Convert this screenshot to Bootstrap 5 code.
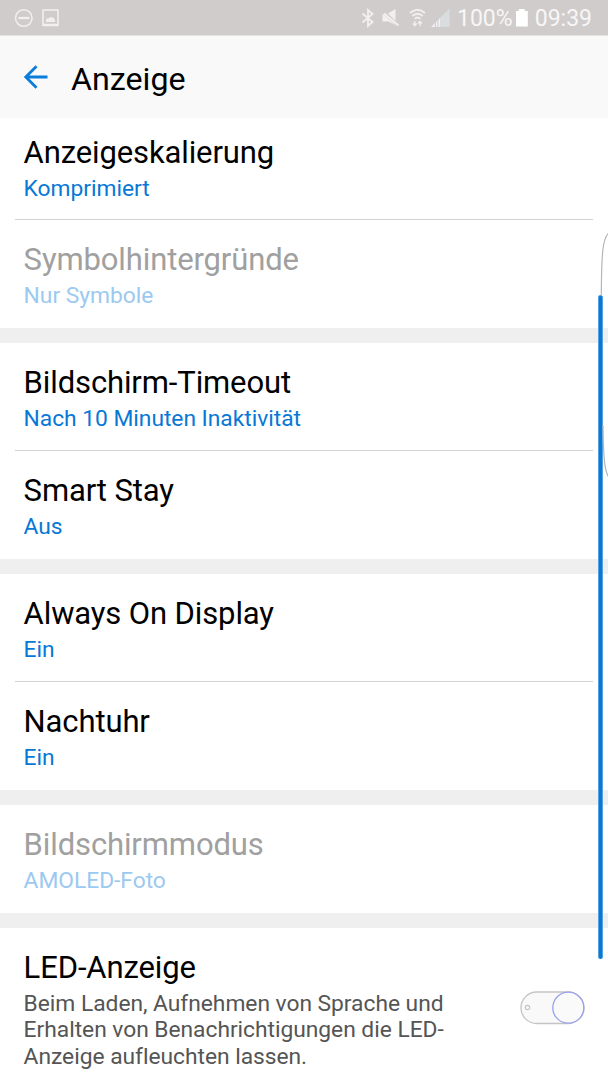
<!DOCTYPE html>
<html lang="de">
<head>
<meta charset="utf-8">
<meta name="viewport" content="width=device-width, initial-scale=1">
<title>Anzeige</title>
<link href="https://cdn.jsdelivr.net/npm/bootstrap@5.3.0/dist/css/bootstrap.min.css" rel="stylesheet">
<style>
  body { font-family: Roboto, sans-serif; color: #000; background: #fff; }
  .screen { height: 1080px; }
  .status-bar { height: 36px; background: linear-gradient(#d0cccc 35px, #e4e2e2 35px); color: #f7f6f6; font-size: 23px; line-height: 38px; }
  .status-bar svg, .app-bar svg { display: block; flex: none; }
  .clock { margin-right: 16px; }
  .app-bar { height: 82px; background: #f9f9f9; }
  .app-title { font-size: 32.2px; line-height: 36px; font-weight: 400; padding-top: 3px; }
  .setting { height: 108px; padding: 21px 24px 0; position: relative; }
  .setting + .setting::before { content: ""; position: absolute; left: 15px; right: 15px; top: -1px; height: 1px; background: #d3d3d3; }
  .setting.first-cut { height: 102px; padding-top: 16px; }
  .setting-title { font-size: 31px; line-height: 37px; font-weight: 400; letter-spacing: -.12px; margin-left: -.4px; white-space: nowrap; }
  .setting-value { font-size: 22.8px; line-height: 26.7px; letter-spacing: -.03px; color: #0878d6; margin: 4.5px 0 0 -.4px; white-space: nowrap; }
  .is-off .setting-title { color: #a0a0a0; }
  .is-off .setting-value { color: #9cc9ef; }
  .setting-note { color: #555; }
  .section-gap { height: 15px; background: #efefef; }
  .toggle { width: 65px; height: 34px; margin: 42px -1px 0 0; }
  .scroll-thumb { left: 598px; top: 295px; width: 5px; height: 664px; border-radius: 3px; background: #0878d6; border: solid #55a2e2; border-width: 0 1px; }
  .edge-handle { left: 600px; top: 230px; }
</style>
</head>
<body>
<div class="screen position-relative overflow-hidden">
  <header>
    <div class="status-bar d-flex">
      <svg width="350" height="36" fill="none" stroke="#f1efef">
        <circle cx="23.800" cy="18" r="8.300" stroke-width="1.500"/>
        <path d="M18.500 18h11" stroke-width="2.200"/>
        <path d="M43 10h15v15.500H43zM43 24.500h15" stroke-width="1.600" stroke-linejoin="round"/>
        <path d="M46 22v-2.500l2-1.500 1 .5 1.500-2 1.500 1.500 1-1 2 3v2z" fill="#f1efef" stroke="none"/>
      </svg>
      <svg width="107" height="36" viewBox="350 0 107 36" fill="none" stroke="#f1efef">
        <path d="M362.500 13.500l10 8.500-4.500 4V10l4.500 4-10 8.500" stroke-width="1.900"/>
        <path d="M388 13.500l7.500-4.500v12zM383.500 14.500l12 10.500-7-3.500h-6v-7z" fill="#f1efef" stroke="none"/>
        <path d="M384 13.500l14.500 12" stroke-width="2.200"/>
        <path d="M410 13q7.500-6.500 15 0M412.300 16q5.200-4.500 10.400 0M414.600 18.800q2.900-2.300 5.800 0" stroke-width="1.800"/>
        <path d="M414.800 21v4.500m-2-2l2 2 2-2M420 26v-4.500m-2 2l2-2 2 2" stroke-width="1.400"/>
        <path d="M440 18L449.500 8.500V27H440z" fill="#d9dde0" stroke="none"/>
        <path d="M431 27l4-4v4zM436 27v-5l1.500-1.500V27zM438.500 27v-7.500L440 18v9z" fill="#f1efef" stroke="none"/>
      </svg>
      <span class="battery-level">100%</span>
      <svg class="ms-auto" width="19" height="36" viewBox="513 0 19 36"><path d="M512.800 11h3V9h6v2h3v15.500h-12z" fill="#fff"/></svg>
      <span class="clock">09:39</span>
    </div>
    <div class="app-bar d-flex align-items-center">
      <svg width="71" height="82" fill="none" stroke="#0a7cdc" stroke-width="2.800"><path d="M47.500 41H25.500M36.500 30.300L25.800 41l10.700 10.700"/></svg>
      <h1 class="app-title m-0">Anzeige</h1>
    </div>
  </header>
  <main class="settings">
    <section>
      <div class="setting first-cut"><div class="setting-title">Anzeigeskalierung</div><div class="setting-value">Komprimiert</div></div>
      <div class="setting is-off"><div class="setting-title">Symbolhintergründe</div><div class="setting-value">Nur Symbole</div></div>
    </section>
    <div class="section-gap"></div>
    <section>
      <div class="setting"><div class="setting-title">Bildschirm-Timeout</div><div class="setting-value">Nach 10 Minuten Inaktivität</div></div>
      <div class="setting"><div class="setting-title">Smart Stay</div><div class="setting-value">Aus</div></div>
    </section>
    <div class="section-gap"></div>
    <section>
      <div class="setting"><div class="setting-title">Always On Display</div><div class="setting-value">Ein</div></div>
      <div class="setting"><div class="setting-title">Nachtuhr</div><div class="setting-value">Ein</div></div>
    </section>
    <div class="section-gap"></div>
    <section>
      <div class="setting is-off"><div class="setting-title">Bildschirmmodus</div><div class="setting-value">AMOLED-Foto</div></div>
    </section>
    <div class="section-gap"></div>
    <section>
      <div class="setting d-flex justify-content-between">
        <div><div class="setting-title">LED-Anzeige</div><div class="setting-value setting-note">Beim Laden, Aufnehmen von Sprache und<br>Erhalten von Benachrichtigungen die LED-<br>Anzeige aufleuchten lassen.</div></div>
        <svg class="toggle flex-shrink-0" viewBox="0 0 65 34" role="switch" aria-checked="false">
          <rect x="1" y="1" width="63" height="31.500" rx="15.700" fill="#f9f9f9" stroke="#c4c4c4" stroke-width="1.300"/>
          <circle cx="7.500" cy="16.500" r="2.200" fill="none" stroke="#c4c4c4" stroke-width="1.200"/>
          <circle cx="48.300" cy="16.700" r="15.500" fill="#fafafa" stroke="#96a2ea" stroke-width="1.300"/>
        </svg>
      </div>
    </section>
  </main>
  <div class="scroll-thumb position-absolute"></div>
  <svg class="edge-handle position-absolute" width="8" height="250" fill="none" stroke="#b5b5b5" stroke-width="1.200"><path d="M8.500 3C3 9 1.500 20 1.300 66M3 195C3.300 230 5 241 8.500 247"/></svg>
</div>
<script src="https://cdn.jsdelivr.net/npm/bootstrap@5.3.0/dist/js/bootstrap.bundle.min.js"></script>
</body>
</html>
